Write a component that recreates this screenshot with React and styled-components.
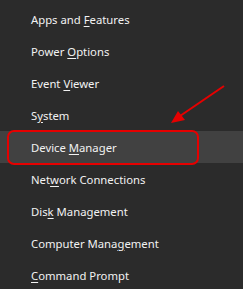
import React from "react";
import styled, { createGlobalStyle } from "styled-components";

const GlobalStyle = createGlobalStyle`
  html, body {
    margin: 0;
    padding: 0;
    background: #2b2b2b;
  }
`;

const Page = styled.div`
  position: relative;
  width: 243px;
  height: 289px;
  overflow: hidden;
  background: #2b2b2b;
  font-family: "Noto Sans", "Open Sans", sans-serif;
`;

const Menu = styled.ul`
  list-style: none;
  margin: 0;
  padding: 3px 0 0;
`;

const Item = styled.li`
  position: relative;
  display: flex;
  align-items: center;
  height: 32px;
  padding-left: 31px;
  font-size: 11.3px;
  color: #f2f2f2;
  background: ${(p) => (p.$active ? "#414141" : "transparent")};
  u {
    text-decoration-thickness: 1px;
    text-underline-offset: 2px;
  }
`;

const Callout = styled.span`
  position: absolute;
  top: -1px;
  bottom: -2px;
  left: 7px;
  right: 44px;
  border: 2px solid #e60000;
  border-radius: 7px;
`;

const Arrow = styled.svg`
  position: absolute;
  left: 0;
  top: 0;
  pointer-events: none;
`;

const items = [
  ["Apps and ", "F", "eatures"],
  ["Power ", "O", "ptions"],
  ["Event ", "V", "iewer"],
  ["S", "y", "stem"],
  ["Device ", "M", "anager"],
  ["Net", "w", "ork Connections"],
  ["Dis", "k", " Management"],
  ["Computer Mana", "g", "ement"],
  ["", "C", "ommand Prompt"],
];

export default function App() {
  return (
    <Page>
      <GlobalStyle />
      <Menu>
        {items.map(([before, key, after], i) => (
          <Item key={i} $active={i === 4}>
            <span>
              {before}
              <u>{key}</u>
              {after}
            </span>
            {i === 4 && <Callout />}
          </Item>
        ))}
      </Menu>
      <Arrow width="243" height="289" viewBox="0 0 243 289">
        <line x1="224" y1="86" x2="180" y2="116" stroke="#e60000" strokeWidth="2" />
        <polygon points="171,123 178,111 185,120" fill="#e60000" />
      </Arrow>
    </Page>
  );
}
